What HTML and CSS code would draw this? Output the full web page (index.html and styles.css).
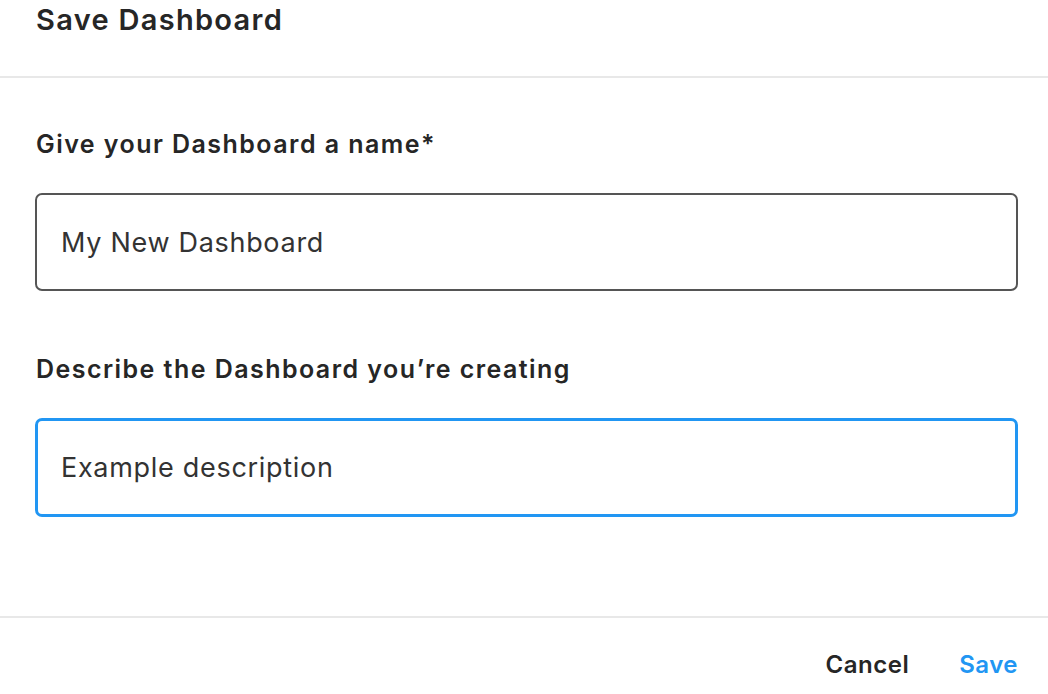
FILE: index.html
```html
<!DOCTYPE html>
<html>
<head>
<meta charset="utf-8">
<link rel="stylesheet" href="styles.css">
</head>
<body>
<div class="dialog">
  <header class="header">
    <h1 class="title">Save Dashboard</h1>
  </header>
  <main class="body">
    <div class="field">
      <label class="label">Give your Dashboard a name*</label>
      <div class="input">My New Dashboard</div>
    </div>
    <div class="field">
      <label class="label">Describe the Dashboard you’re creating</label>
      <div class="input input-focus">Example description</div>
    </div>
  </main>
  <footer class="footer">
    <button class="btn btn-cancel">Cancel</button>
    <button class="btn btn-save">Save</button>
  </footer>
</div>
</body>
</html>
```
FILE: styles.css
```css
html, body {
  margin: 0;
  padding: 0;
  background: #ffffff;
}
body {
  font-family: Inter, "Noto Sans", sans-serif;
  color: #262626;
  width: 1048px;
  height: 694px;
  overflow: hidden;
}
.dialog {
  display: flex;
  flex-direction: column;
}
.header {
  height: 76px;
  flex: none;
  border-bottom: 2px solid #e8e8e8;
  padding: 0 36px;
  box-sizing: content-box;
}
.title {
  margin: 0;
  padding-top: 3px;
  font-size: 29px;
  line-height: 34px;
  font-weight: 600;
  letter-spacing: 1.3px;
  color: #262626;
}
.body {
  padding: 51px 30px 99px 35px;
  display: flex;
  flex-direction: column;
  gap: 63px;
  border-bottom: 2px solid #e8e8e8;
  flex: none;
}
.field {
  display: flex;
  flex-direction: column;
  gap: 34px;
}
.label {
  font-size: 25px;
  line-height: 30px;
  font-weight: 600;
  letter-spacing: 1.45px;
  color: #262626;
  padding-left: 1px;
}
.input {
  height: 98px;
  flex: none;
  box-sizing: border-box;
  border: 2px solid #555555;
  border-radius: 7px;
  padding: 0 24px;
  display: flex;
  align-items: center;
  font-size: 27px;
  letter-spacing: 0.7px;
  color: #333333;
}
.input-focus {
  height: 99px;
  border: 3px solid #2196f3;
  padding: 0 23px;
}
.footer {
  display: flex;
  justify-content: flex-end;
  align-items: flex-start;
  gap: 50px;
  padding: 32px 30px 0 0;
  flex: none;
}
.btn {
  background: none;
  border: none;
  padding: 0;
  font-family: Inter, "Noto Sans", sans-serif;
  font-size: 24px;
  line-height: 30px;
  font-weight: 600;
  letter-spacing: 0.5px;
  cursor: pointer;
}
.btn-cancel {
  color: #262626;
}
.btn-save {
  color: #2196f3;
}
```
